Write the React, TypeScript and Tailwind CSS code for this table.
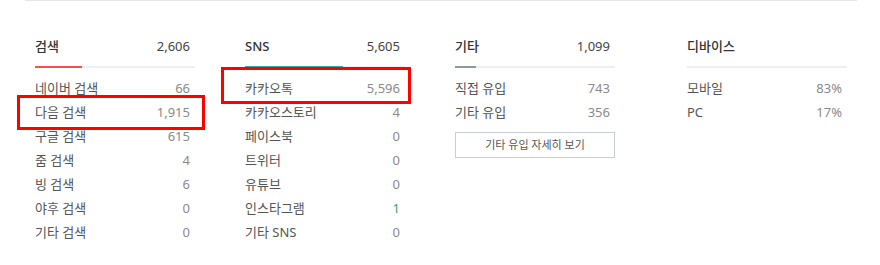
import React from "react";

type Row = { label: string; value: string; highlight?: boolean };

type Column = {
  title: string;
  total?: string;
  barClass: string;
  rows: Row[];
  button?: string;
};

const columns: Column[] = [
  {
    title: "검색",
    total: "2,606",
    barClass: "w-[47px] bg-[#f4524a]",
    rows: [
      { label: "네이버 검색", value: "66" },
      { label: "다음 검색", value: "1,915" },
      { label: "구글 검색", value: "615" },
      { label: "줌 검색", value: "4" },
      { label: "빙 검색", value: "6" },
      { label: "야후 검색", value: "0" },
      { label: "기타 검색", value: "0" },
    ],
  },
  {
    title: "SNS",
    total: "5,605",
    barClass: "w-[98px] bg-[#22b3a4]",
    rows: [
      { label: "카카오톡", value: "5,596" },
      { label: "카카오스토리", value: "4" },
      { label: "페이스북", value: "0" },
      { label: "트위터", value: "0" },
      { label: "유튜브", value: "0" },
      { label: "인스타그램", value: "1", highlight: true },
      { label: "기타 SNS", value: "0" },
    ],
  },
  {
    title: "기타",
    total: "1,099",
    barClass: "w-[21px] bg-[#8f979e]",
    rows: [
      { label: "직접 유입", value: "743" },
      { label: "기타 유입", value: "356" },
    ],
    button: "기타 유입 자세히 보기",
  },
  {
    title: "디바이스",
    barClass: "w-0",
    rows: [
      { label: "모바일", value: "83%" },
      { label: "PC", value: "17%" },
    ],
  },
];

const StatColumn = ({ col }: { col: Column }) => (
  <div className="flex w-[160px] flex-col">
    <div className="flex h-[20px] items-center justify-between pr-[5px] text-[13px]">
      <span className="font-medium text-[#333]">{col.title}</span>
      {col.total && <span className="text-[#444]">{col.total}</span>}
    </div>
    <div className="mt-[9px] flex h-[2px] w-full bg-[#eeeeee]">
      <div className={col.barClass} />
    </div>
    <ul className="mt-[9px] flex flex-col">
      {col.rows.map((row, index) => (
        <li
          key={index + 1}
          className="flex h-[24px] items-center justify-between pr-[5px] text-[13px]"
        >
          <span className="text-[#555]">{row.label}</span>
          <span className={row.highlight ? "text-[#3e9f5c]" : "text-[#8a8a8a]"}>
            {row.value}
          </span>
        </li>
      ))}
    </ul>
    {col.button && (
      <button className="mt-[7px] h-[26px] w-full border border-[#c8cdd6] bg-white text-[11px] text-[#555]">
        {col.button}
      </button>
    )}
  </div>
);

const App = () => {
  return (
    <div
      className="relative h-[265px] w-[880px] bg-white"
      style={{ fontFamily: '"Noto Sans", "Noto Sans CJK KR", sans-serif' }}
    >
      <div className="ml-[25px] w-[832px] border-t border-[#e6e6e6] pl-[10px] pt-[36px]">
        <div className="flex">
          <StatColumn col={columns[0]} />
          <div className="ml-[50px]">
            <StatColumn col={columns[1]} />
          </div>
          <div className="ml-[50px]">
            <StatColumn col={columns[2]} />
          </div>
          <div className="ml-[72px]">
            <StatColumn col={columns[3]} />
          </div>
        </div>
      </div>

      {/* annotation boxes */}
      <div className="absolute left-[17px] top-[95px] h-[35px] w-[188px] border-[3px] border-[#ff0000]" />
      <div className="absolute left-[221px] top-[67px] h-[37px] w-[190px] border-[3px] border-[#ff0000]" />
    </div>
  );
};

export default App;
